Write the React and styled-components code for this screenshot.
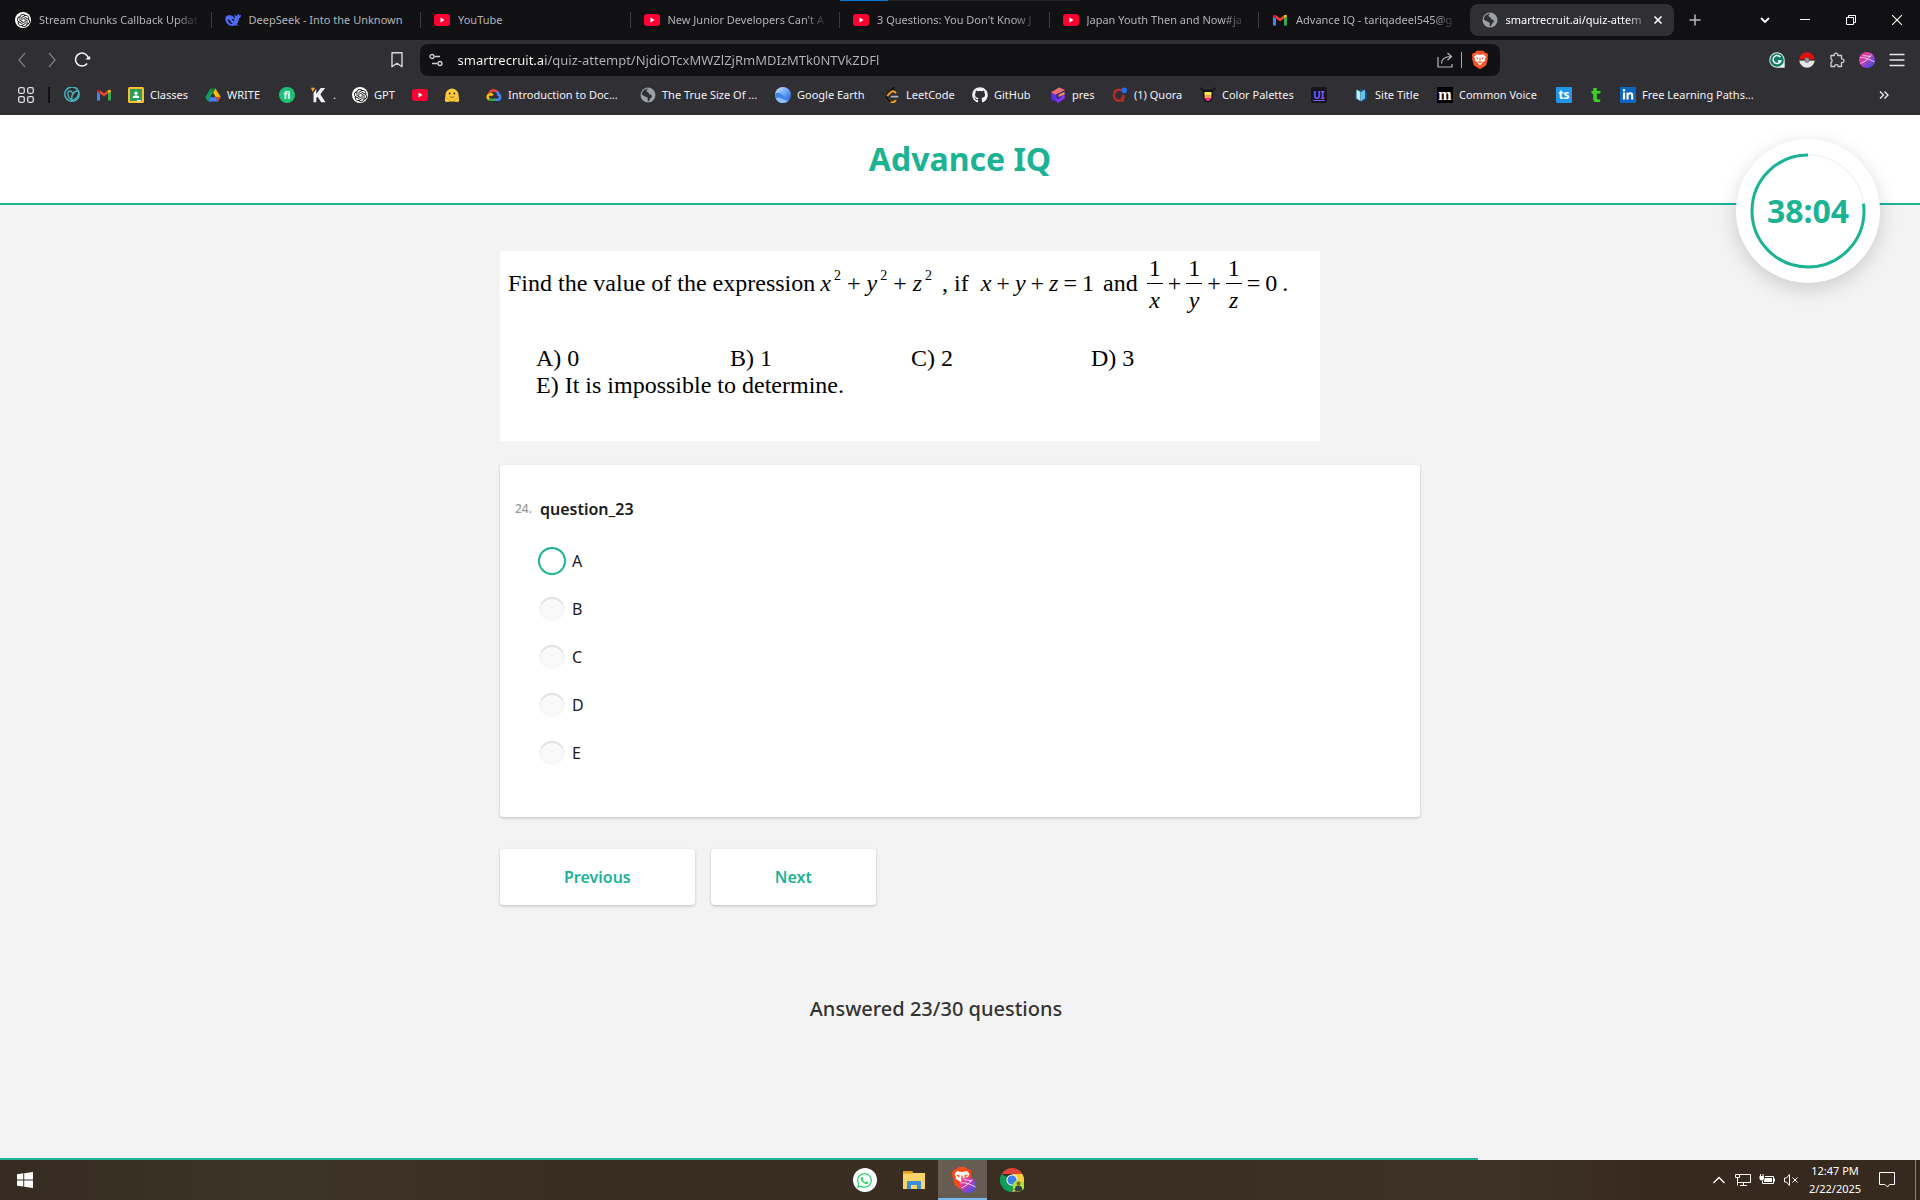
import React from "react";
import styled, { createGlobalStyle, css } from "styled-components";
import { SiOpenai } from "react-icons/si";
import { FaGithub, FaLinkedinIn, FaWhatsapp } from "react-icons/fa";

const GREEN = "#1bb394";
const FONT = `"Noto Sans", "Open Sans", sans-serif`;

const GlobalStyle = createGlobalStyle`
  *, *::before, *::after { box-sizing: border-box; }
  body { margin: 0; background: #f3f3f3; }
  button, input { font: inherit; color: inherit; }
  button { border: 0; background: none; padding: 0; cursor: pointer; }
  svg { display: block; }
`;

const Screen = styled.div`
  min-height: 100vh;
  display: flex;
  flex-direction: column;
  font-family: ${FONT};
`;

/* ---------- browser window ---------- */

const Chrome = styled.div`
  background: #302f34;
  color: #f2f2f4;
  font-size: 11px;
  line-height: 16px;
  height: 115px;
`;

const TabStrip = styled.div`
  position: relative;
  display: flex;
  height: 40px;
  background: #111113;
`;

const ShareMarker = styled.div`
  position: absolute;
  top: 0;
  left: 840px;
  width: 240px;
  height: 1px;
  background: linear-gradient(90deg, #0078d7 48px, #242427 48px);
`;

const TabList = styled.div`
  flex: 0 1 1678px;
  min-width: 0;
  display: grid;
  grid-template-columns: repeat(8, minmax(0, 1fr));
  padding-left: 2px;
`;

const TabItem = styled.div`
  display: flex;
  align-items: center;
  margin: 4px 4px 4px 1px;
  padding: 0 8px 0 12px;
  border-radius: 8px;
  position: relative;
  ${(p) =>
    p.$active
      ? css`
          background: #302f34;
          color: #ffffff;
        `
      : css`
          color: #b4b4b8;
        `}
  ${(p) =>
    p.$divided &&
    css`
      &::after {
        content: "";
        position: absolute;
        right: -4px;
        top: 8px;
        width: 1px;
        height: 16px;
        background: #3b3b3f;
      }
    `}
`;

const TabButton = styled.button`
  flex: 1;
  min-width: 0;
  display: flex;
  align-items: center;
  gap: 8px;
  text-align: left;
  svg { flex: none; }
`;

const TabTitle = styled.span`
  flex: 1;
  min-width: 0;
  overflow: hidden;
  white-space: nowrap;
  ${(p) =>
    p.$fade &&
    css`
      mask-image: linear-gradient(90deg, #000 calc(100% - 24px), transparent);
    `}
`;

const IconButton = styled.button`
  width: ${(p) => p.$w || 30}px;
  align-self: stretch;
  display: flex;
  align-items: center;
  justify-content: center;
  flex: none;
`;

const Spacer = styled.div`
  flex: 1;
`;

const Toolbar = styled.div`
  display: flex;
  align-items: center;
  height: 40px;
  padding: 0 8px 0 7px;
`;

const ToolGroup = styled.div`
  flex: 1;
  display: flex;
  align-self: stretch;
  justify-content: ${(p) => (p.$end ? "flex-end" : "flex-start")};
`;

const AddressBar = styled.div`
  flex: 0 1 1080px;
  height: 32px;
  display: flex;
  align-items: center;
  padding-right: 2px;
  border-radius: 8px;
  background: #111113;
`;

const UrlInput = styled.input`
  flex: 1;
  min-width: 0;
  border: 0;
  outline: 0;
  padding: 0 6px;
  font-size: 13px;
  color: #c4c4c8;
  background: linear-gradient(90deg, #ffffff 94px, #b4b4b8 94px);
  background-clip: text;
  -webkit-background-clip: text;
  -webkit-text-fill-color: transparent;
`;

const ShieldDivider = styled.span`
  width: 1px;
  height: 16px;
  flex: none;
  background: #a8a8ac;
`;

const Bookmarks = styled.nav`
  display: flex;
  align-items: center;
  height: 30px;
  padding: 0 22px 0 18px;
`;

const AppsDivider = styled.span`
  width: 2px;
  height: 16px;
  margin: 0 14px;
  background: #111113;
`;

const BookmarkList = styled.div`
  display: flex;
  gap: 16px;
`;

const Bookmark = styled.a`
  display: flex;
  align-items: center;
  gap: 6px;
  color: inherit;
  text-decoration: none;
  white-space: nowrap;
  svg { flex: none; }
`;

const BookmarkLabel = styled.span`
  width: ${(p) => p.$w}px;
`;

const LetterIcon = styled.span`
  display: flex;
  align-items: center;
  justify-content: center;
  flex: none;
  width: 16px;
  height: 16px;
  border-radius: ${(p) => p.$radius || 0}px;
  background: ${(p) => p.$bg || "transparent"};
  color: ${(p) => p.$fg};
  font-family: ${(p) => p.$font || FONT};
  font-size: ${(p) => p.$size || 12}px;
  line-height: 14px;
  font-weight: 700;
`;

const Badge = styled.span`
  display: flex;
  align-items: center;
  justify-content: center;
  flex: none;
  width: ${(p) => p.$size || 16}px;
  height: ${(p) => p.$size || 16}px;
  border-radius: 50%;
  background: #ffffff;
  color: ${(p) => p.$fg || "#111113"};
`;

/* ---------- quiz page ---------- */

const Header = styled.header`
  position: relative;
  display: flex;
  align-items: center;
  justify-content: center;
  height: 90px;
  background: #ffffff;
  border-bottom: 2px solid ${GREEN};
`;

const Title = styled.h1`
  margin: 0;
  font-size: 32px;
  line-height: 44px;
  font-weight: 700;
  color: ${GREEN};
`;

const Timer = styled.div`
  position: absolute;
  top: 24px;
  right: 40px;
  width: 144px;
  height: 144px;
  display: grid;
  place-items: center;
  border-radius: 50%;
  background: #ffffff;
  box-shadow: 0 6px 20px rgba(0, 0, 0, 0.16);
  color: ${GREEN};
  font-size: 32px;
  line-height: 44px;
  font-weight: 700;
  > * { grid-area: 1 / 1; }
`;

const Main = styled.main`
  flex: 1;
  width: 920px;
  max-width: 100%;
  margin: 0 auto;
  padding-top: 46px;
`;

const Problem = styled.section`
  width: 820px;
  max-width: 100%;
  min-height: 190px;
  padding: 1px 8px 0;
  background: #ffffff;
  color: #000000;
  font-family: "Liberation Serif", "Times New Roman", serif;
  font-size: 24px;
  line-height: 27px;
`;

const Statement = styled.div`
  display: flex;
  align-items: center;
  height: 62px;
  white-space: pre;
`;

const Formula = styled.span`
  display: inline-flex;
  align-items: center;
  gap: ${(p) => p.$gap}px;
  margin: 0 ${(p) => p.$mr || 0}px 0 ${(p) => p.$ml || 0}px;
`;

const Power = styled.span`
  display: inline-flex;
  gap: 3px;
  sup {
    font-size: 14px;
    line-height: 12px;
    vertical-align: baseline;
  }
`;

const Fraction = styled.span`
  display: inline-flex;
  flex-direction: column;
  align-items: center;
  width: 16px;
  line-height: 32px;
  > :first-child {
    height: 31px;
  }
  > :last-child {
    border-top: 1px solid #000000;
    width: 100%;
    text-align: center;
    height: 31px;
  }
`;

const Choices = styled.div`
  display: grid;
  grid-template-columns: 194px 181px 180px auto;
  padding: 31px 0 0 28px;
`;

const WideChoice = styled.span`
  grid-column: 1 / -1;
`;

const Card = styled.form`
  margin-top: 24px;
  min-height: 352px;
  padding: 31px 15px 40px;
  border-radius: 4px;
  background: #ffffff;
  box-shadow: 0 1px 3px rgba(0, 0, 0, 0.22);
`;

const Question = styled.fieldset`
  border: 0;
  margin: 0;
  padding: 0;
`;

const Legend = styled.legend`
  display: flex;
  align-items: center;
  gap: 8px;
  padding: 0;
  font-size: 16px;
  line-height: 26px;
  font-weight: 600;
  color: #1a1a1a;
`;

const Ordinal = styled.span`
  font-size: 12px;
  font-weight: 500;
  color: #999999;
`;

const Options = styled.div`
  display: flex;
  flex-direction: column;
  gap: 24px;
  padding: 27px 0 0 25px;
`;

const Option = styled.label`
  display: flex;
  align-items: center;
  gap: 8px;
  font-size: 16px;
  line-height: 24px;
  color: #1a1a1a;
`;

const Radio = styled.input`
  appearance: none;
  width: 24px;
  height: 24px;
  margin: 0;
  border-radius: 50%;
  background: #f9f9f9;
  box-shadow: inset 0 1px 2px rgba(0, 0, 0, 0.18);
  ${(p) =>
    p.$current &&
    css`
      background: #ffffff;
      box-shadow: 0 0 0 2px ${GREEN};
    `}
`;

const Actions = styled.div`
  display: flex;
  gap: 16px;
  margin-top: 32px;
`;

const ActionButton = styled.button`
  height: 56px;
  padding: 0 64px;
  border-radius: 4px;
  background: #ffffff;
  box-shadow: 0 1px 3px rgba(0, 0, 0, 0.22);
  font-size: 16px;
  line-height: 24px;
  font-weight: 600;
  color: ${GREEN};
`;

const Answered = styled.p`
  margin: 88px 48px 0 0;
  text-align: center;
  font-size: 20px;
  line-height: 32px;
  font-weight: 500;
  color: #333333;
`;

const Progress = styled.div`
  height: 2px;
  background: linear-gradient(${GREEN}, ${GREEN}) no-repeat;
  background-size: 77% 100%;
`;

/* ---------- desktop taskbar ---------- */

const Taskbar = styled.footer`
  display: grid;
  grid-template-columns: 1fr auto 1fr;
  height: 40px;
  background: linear-gradient(90deg, #352b20 0, #3d3428 14%, #392d21 30%, #3a2e22 60%, #3d3226 78%, #38291f 86%, #36291e 100%);
  color: #ffffff;
  font-size: 11px;
  line-height: 18px;
`;

const TaskGroup = styled.div`
  display: flex;
  align-items: center;
  justify-content: ${(p) => (p.$end ? "flex-end" : "flex-start")};
  padding-right: ${(p) => (p.$apps ? 44 : 0)}px;
`;

const TaskButton = styled.button`
  width: 49px;
  height: 40px;
  display: flex;
  align-items: center;
  justify-content: center;
  ${(p) =>
    p.$active &&
    css`
      background: #665c52;
      box-shadow: inset 0 -2px 0 #76b9ed;
    `}
`;

const Clock = styled.div`
  width: 64px;
  text-align: center;
  white-space: nowrap;
`;

const DesktopEdge = styled.span`
  width: 5px;
  height: 40px;
  margin-left: 8px;
  border-left: 1px solid #8a8078;
`;

/* ---------- icons ---------- */

const Svg = ({ size = 16, box = 16, children }) => (
  <svg width={size} height={size} viewBox={`0 0 ${box} ${box}`} fill="none" aria-hidden="true">
    {children}
  </svg>
);

const Openai = () => (
  <Badge>
    <SiOpenai size={13} />
  </Badge>
);

const YouTube = () => (
  <Svg>
    <rect x="0" y="2" width="16" height="12" rx="3" fill="#ff0033" />
    <path d="M6.5 5.5v5l4-2.500z" fill="#fff" />
  </Svg>
);

const DeepSeek = () => (
  <Svg>
    <path
      d="M.3 6.500C.3 3.500 3.500 2.500 6.200 3.600 7.800 4.300 9 5.500 9.900 6.700 10.300 5.500 9.700 4.300 9 3.300c1-.2 2 .2 2.700 1C12 3.200 12.800 2.200 13.700 1.800c.2.500.3 1 .2 1.500.7 0 1.300-.2 1.900-.6.2 2-.7 3.400-2 3.900-.1 2.500-.8 4.300-2 5.500.4.600 1 .9 1.700 1-1 .8-2.300.9-3.300.2C6 15.200.5 12.500.3 6.500z"
      fill="#4d6bfe"
    />
    <path d="M2.600 7.200c1.600.2 2.800 1.400 3.500 2.700.5.900 1.200 1.600 2.100 1.900-2.500.5-5.100-1.100-5.600-4.600z" fill="#111113" />
    <path d="M7 7.300c1 .2 1.600.8 1.900 1.700" stroke="#111113" strokeWidth="1.200" />
  </Svg>
);

const Gmail = () => (
  <Svg>
    <path d="M1 13.500V4.300l3 2.300v6.900z" fill="#4285f4" />
    <path d="M15 13.500V4.300l-3 2.300v6.900z" fill="#34a853" />
    <path d="M4 6.600V3.300L8 6.300l4-3v3.300l-4 3z" fill="#ea4335" />
    <path d="M1 4.300C1 2.500 2.700 2.200 4 3.300v3.300L1 4.400z" fill="#c5221f" />
    <path d="M15 4.300c0-1.800-1.700-2.100-3-1v3.300l3-2.200z" fill="#fbbc04" />
  </Svg>
);

const Globe = () => (
  <Svg>
    <circle cx="8" cy="8" r="7.500" fill="#9aa0a6" />
    <path d="M8.500 1.800c-2 .7-2.800 2.200-1 3.200 1.800.6.800 2 2.500 2.400 2 .4 2.500 2.500.8 3.500-1.300.8-1.200 2.300-1.900 3.300-1.500.1-1.600-1.900-1-3.200C6.500 9.800 4.500 9.500 1.800 7.500c.2-3.200 3-6.100 6.700-5.700z" fill="#302f34" />
  </Svg>
);

const Back = () => (
  <Svg size={18} box={18}>
    <path d="M12 2 6 9l6 7" stroke="#7b7b80" strokeWidth="1.300" />
  </Svg>
);
const Forward = () => (
  <Svg size={18} box={18}>
    <path d="m6 2 6 7-6 7" stroke="#7b7b80" strokeWidth="1.300" />
  </Svg>
);
const Reload = () => (
  <Svg size={18} box={18}>
    <path d="M14.200 12.500A6.500 6.500 0 1 1 15.500 8" stroke="#f2f2f4" strokeWidth="1.600" />
    <path d="M12.200 8.500h5V5z" fill="#f2f2f4" />
  </Svg>
);
const BookmarkIcon = () => (
  <Svg size={18} box={18}>
    <path d="M4 1.800h10v14l-5-3.600-5 3.600z" stroke="#d8d8dc" strokeWidth="1.400" strokeLinejoin="round" />
  </Svg>
);
const SiteSettings = () => (
  <Svg>
    <g stroke="#d0d0d4" strokeWidth="1.300">
      <circle cx="4" cy="4.500" r="2" />
      <path d="M6.500 4.500H12M4 11.500h5.500" />
      <circle cx="12" cy="11.500" r="2" />
    </g>
  </Svg>
);
const Share = () => (
  <Svg>
    <g stroke="#b8b8bc" strokeWidth="1.200" strokeLinejoin="round">
      <path d="M1 5v10h14v-3" />
      <path d="M4.500 11.500C4.500 7 7.500 4.500 14 4.500M10.500 1 14.500 4.500l-4 3.700" />
    </g>
  </Svg>
);
const Brave = () => (
  <svg width="20" height="20" viewBox="0 0 24 24" aria-hidden="true">
    <path d="M12 1h4l2 2.200 2.700.4 1 3.200-.7 1.700.5 2-2.300 8L12 23l-7.200-4.500-2.300-8 .5-2-.7-1.700 1-3.200L6 3.200 8 1z" fill="#fb542b" />
    <path d="m8 5 4 1 4-1 3 3.200-1.300 3.300.3 1.500-3.500 2-.2 1.200L12 18.500l-2.300-2.300-.2-1.200L6 13l.3-1.500L5 8.200z" fill="#fff" />
    <path d="m7 8.500 3.200 1-.7 2zM17 8.500l-3.200 1 .7 2zM12 8l.8 3.500L12 14l-.8-2.500zM9.500 13.200l2.500 1.300 2.500-1.300-.8 2-1.700.6-1.700-.6z" fill="#fb542b" />
  </svg>
);
const Grammarly = () => (
  <Svg>
    <path d="M8 .3A7.700 7.700 0 0 1 15.700 8v7.700H8A7.700 7.700 0 0 1 8 .3z" fill="#e8f3ef" />
    <circle cx="8" cy="8" r="6.800" fill="#0b7b63" />
    <path d="M11.400 5.200A4 4 0 1 0 11.800 9H8.800" stroke="#fff" strokeWidth="1.500" />
  </Svg>
);
const Pokeball = () => (
  <Svg>
    <path d="M.3 8a7.700 7.700 0 0 1 15.400 0z" fill="#e0100c" />
    <path d="M.3 8a7.700 7.700 0 0 0 15.400 0z" fill="#e4e6e8" />
    <path d="M.5 8h15" stroke="#222" strokeWidth="1.200" />
    <circle cx="8" cy="8" r="2.300" fill="#9a9a9e" stroke="#666" />
  </Svg>
);
const Puzzle = () => (
  <Svg>
    <path
      d="M2 3.500h3.300a1.800 1.800 0 1 1 3.400 0h3.800v3.400a1.900 1.900 0 1 1 0 3.600v4H9.200a1.800 1.800 0 0 0-3.600 0H2v-4.200a1.700 1.700 0 0 0 0-3.200z"
      stroke="#d0d0d4"
      strokeWidth="1.300"
      strokeLinejoin="round"
    />
  </Svg>
);
const Profile = () => (
  <Svg>
    <defs>
      <linearGradient id="orb" x1="0" y1="0" x2="1" y2="1">
        <stop offset="0.250" stopColor="#f0389a" />
        <stop offset="0.800" stopColor="#5a4be0" />
      </linearGradient>
    </defs>
    <circle cx="8" cy="8" r="8" fill="url(#orb)" />
    <path d="M.8 5.500C5 5 10 7 15.500 10M1.500 11.500C6 10 10 6 12.500 2.500M4 3.500l8 1" stroke="#fbdcf0" strokeWidth="0.900" />
  </Svg>
);
const Menu = () => (
  <Svg>
    <path d="M.5 2.500h15M.5 8h15M.5 13.500h15" stroke="#e6e6e8" strokeWidth="1.400" />
  </Svg>
);
const AppsGrid = () => (
  <Svg>
    <g stroke="#e0e0e4" strokeWidth="1.300">
      <rect x="0.700" y="0.700" width="5.600" height="5.600" rx="1.500" />
      <rect x="9.700" y="0.700" width="5.600" height="5.600" rx="1.500" />
      <rect x="0.700" y="9.700" width="5.600" height="5.600" rx="1.500" />
      <rect x="9.700" y="9.700" width="5.600" height="5.600" rx="1.500" />
    </g>
  </Svg>
);
const Leaf = () => (
  <Svg>
    <g stroke="#46b5ba" strokeWidth="1.400">
      <path d="M13.800 2.800A7.200 7.200 0 1 0 15.200 8c0-1-.2-2-.5-2.700" />
      <path d="M8 13.500C4 11 2.800 6.500 4.500 4.500c2-1.700 4.500 1 4.500 3.500" />
      <path d="M8 13.500c-1-5 1-9.500 6.500-9.800.8 4.500-1.500 8-6.500 9.800z" />
    </g>
  </Svg>
);
const Classroom = () => (
  <Svg>
    <rect width="16" height="16" rx="1.500" fill="#fbc02d" />
    <rect x="2" y="2" width="12" height="12" fill="#2e9c5a" />
    <circle cx="8" cy="6.300" r="1.700" fill="#fff" />
    <path d="M4.500 11c.3-2 1.800-2.500 3.500-2.500s3.200.5 3.500 2.500z" fill="#fff" />
    <path d="M9 13h4v1.500H9z" fill="#e6e6e6" />
  </Svg>
);
const Drive = () => (
  <Svg>
    <path d="M5.500 1.500h5L8 6z" fill="#188038" />
    <path d="M5.500 1.500 8 6 3 14.500.3 10.200z" fill="#0f9d58" />
    <path d="M10.500 1.500 8 6l2.600 4.300h5.200z" fill="#fbbc04" />
    <path d="M5.500 10.300h5.100L8 6z" fill="#302f34" />
    <path d="M5.500 10.300h5.200L13 14.500H3z" fill="#4285f4" />
    <path d="M10.600 10.300h5.200L13 14.500z" fill="#ea4335" />
  </Svg>
);
const KIcon = () => (
  <Svg>
    <path d="M0 .8h4.200L1.600 5z" fill="#f5a623" />
    <path d="M2.500 6 5.300 2v5l4.500-6h4.400L9.300 7.300l5.200 8h-4.300L6.600 9.800 5.300 11.300v4H2.500z" fill="#f4f4f4" />
  </Svg>
);
const Hug = () => (
  <Svg>
    <path d="M1.500 8A6.500 6.500 0 0 1 14.500 8l.7 5.500c-.8 1.800-3.200 2-4.600 1H5.400C4 15.500 1.600 15.300.8 13.500z" fill="#ffcc3a" />
    <circle cx="5.700" cy="6.500" r="1" fill="#3a3b45" />
    <circle cx="10.300" cy="6.500" r="1" fill="#3a3b45" />
    <path d="M5.500 9c1.500 1.200 3.500 1.200 5 0-.3 2.400-4.700 2.400-5 0z" fill="#6b4a30" />
    <path d="M2 11.500c2-.8 3.500 1 3.500 2.800M14 11.500c-2-.8-3.500 1-3.500 2.800" stroke="#f09a1c" />
  </Svg>
);
const Cloud = () => (
  <Svg>
    <path d="M3.500 7C4 3.500 8 2 11.200 5" stroke="#ea4335" strokeWidth="2.600" />
    <path d="M10.800 4.500c1 .8 1.500 1.800 1.500 3 2.200 0 2.700 4.700-.3 5.300H9" stroke="#4285f4" strokeWidth="2.600" />
    <path d="M9.500 12.800H4.800c-1 0-1.700-.3-2.300-.8" stroke="#34a853" strokeWidth="2.600" />
    <path d="M3 12.300C.8 10.500 1.500 7.500 4.500 7.300c1 0 1.800.4 2.300 1" stroke="#fbbc04" strokeWidth="2.600" />
  </Svg>
);
const Earth = () => (
  <Svg>
    <defs>
      <linearGradient id="sea" x1="0" y1="0" x2="1" y2="1">
        <stop offset="0" stopColor="#d6e8ff" />
        <stop offset="0.500" stopColor="#6aa5f8" />
        <stop offset="1" stopColor="#1c4fc0" />
      </linearGradient>
    </defs>
    <circle cx="8" cy="8" r="8" fill="url(#sea)" />
    <path d="M.1 7C3 4.500 5.500 6 8.500 9c2.500 2.300 4.500 2.500 6.500 2-1.300 3-4 5-7 5-4.500 0-8-3.500-7.900-9z" fill="#3f82ee" />
    <path d="M.8 11.500C4 9 6 12 13 14 9 17.500 2.800 16.200.8 11.500z" fill="#8ebcff" />
  </Svg>
);
const LeetCode = () => (
  <Svg>
    <path d="M9.800.8 3.300 7.500" stroke="#0b0b0c" strokeWidth="1.900" strokeLinecap="round" />
    <path d="M11.500 5.500C9.800 3.800 8 4 6.800 5.200L3.500 8.500c-1 1.200-1 2.200 0 3.300l2.700 2.700c1.500 1.300 3.500 1.200 5.300-.8" stroke="#f89f1b" strokeWidth="1.900" strokeLinecap="round" />
    <path d="M2.700 9.500c-.3 1 0 1.700.8 2.400l2.700 2.700" stroke="#0b0b0c" strokeWidth="1.900" strokeLinecap="round" />
    <path d="M7.500 9.700h6" stroke="#b3b3b3" strokeWidth="1.800" strokeLinecap="round" />
  </Svg>
);
const Pres = () => (
  <Svg>
    <path d="M9 .5 15 3.200 6.500 7.500v3l1.700 1 3-1.700V9L8.500 10V7.500l6-2.800v6.800L8 15.800 1.200 12V5z" fill="#5a2cf0" />
    <path d="M9 .5 15 3 5.200 7.700 1.200 5.200z" fill="#ef6f6a" />
    <path d="m5.500 11.500 2.700 1.600 3.300-2.100V8.500l3-1.500v4.500L8 15.800z" fill="#8d35f5" />
    <path d="m8.500 7.700 6-2.900v2.500L8.500 10z" fill="#f5913a" />
  </Svg>
);
const Quora = () => (
  <Svg>
    <path d="M9.500 3.200C6 1.500 2 3.500 2 8.500c0 5 5 6.500 8 4.500 1.500-1.300 1.700-3.500 1.500-5.500" stroke="#b92b27" strokeWidth="2.300" />
    <path d="M8.500 11c1.200.2 2 3.500 3.800 3.500" stroke="#b92b27" strokeWidth="1.700" />
    <circle cx="12.200" cy="3.200" r="2.800" fill="#1f6ff2" />
  </Svg>
);
const Palette = () => (
  <Svg>
    <path d="M.5.800 3 3M15.500.800 13 3M2.500 3.500h11" stroke="#111" strokeWidth="1.700" />
    <path d="M3 4h10v5.500C13 13 10.500 15.500 8 15.500S3 13 3 9.500z" fill="#151515" />
    <path d="M4.500 5h7v3h-7z" fill="#ffe94a" />
    <path d="M4.500 8h7v3h-7z" fill="#ff9a5a" />
    <path d="M4.700 11h6.600C10.500 13.300 9.300 14 8 14s-2.500-.7-3.300-3z" fill="#f2308a" />
  </Svg>
);
const SiteTitle = () => (
  <Svg>
    <path d="M8 1.500 14 5v7l-6 3.500L2 12V5z" fill="#204a70" />
    <path d="M3.500 2.500 7.500 5v9l-4-2.500z" fill="#b9edff" />
    <path d="m8 5 4-2.500v9L8 14z" fill="#5cc6ee" />
  </Svg>
);
const Folder = () => (
  <Svg size={24} box={24}>
    <path d="M1 3h9l1 2H1z" fill="#d99a1c" />
    <path d="M1 5h22v16H1z" fill="#fbd467" />
    <path d="M1 5.500h10V4l-2-1H1z" fill="#e0a01e" />
    <path d="M5 13h14v8h-4v-4H9v4H5z" fill="#3b8fd6" />
  </Svg>
);
const ChromeBrowser = () => (
  <Svg size={24} box={24}>
    <path d="M1.600 6A12 12 0 0 1 22.400 6H12z" fill="#db4437" />
    <path d="M1.600 6A12 12 0 0 0 12 24l5.200-9L12 12z" fill="#0f9d58" />
    <path d="M22.400 6H12l5.200 9L12 24A12 12 0 0 0 22.400 6z" fill="#ffcd40" />
    <circle cx="12" cy="12" r="5.600" fill="#f1f1f1" />
    <circle cx="12" cy="12" r="4.500" fill="#3b7ff0" />
    <circle cx="18.500" cy="18" r="5.800" fill="#a9e62c" />
    <circle cx="18.500" cy="15.500" r="1.900" fill="#8a5a44" />
    <path d="M14.500 22c.5-3.500 2-4.500 4-4.500s3.500 1 4 4.500c-2 2-6 2-8 0z" fill="#34404e" />
  </Svg>
);
const BraveTask = () => (
  <svg width="26" height="26" viewBox="0 0 26 26" aria-hidden="true">
    <path d="M12 0h3l2.500 2.200 3 .8 1 3-.5 4-1.500 7L12 23l-7-4.500L2.500 10 2 6l1-3 3-.8L9 0z" fill="#fb4a14" />
    <path d="m7 4 5 1 5-1 2.500 3-1.500 3 .2 2-3.500 2-2.700 4-2.700-4L5.800 12 6 10 4.500 7z" fill="#fff" />
    <path d="m6 7.500 4 1-1 2zM18 7.500l-4 1 1 2zM12 7l1 4-1 2.500-1-2.500z" fill="#fb4a14" />
    <circle cx="18" cy="18" r="8" fill="url(#orb)" />
    <path d="M11 16c4-1 9 1 14.500 4M11.500 21c4-1.500 8-5 10.500-8.500M14 12.500l8 1.500" stroke="#fbdcf0" fill="none" />
  </svg>
);
const WindowsLogo = () => (
  <Svg>
    <path d="M0 2.200 6.300 1.300v6.200H0zM7.200 1.200 16 0v7.500H7.200zM0 8.400h6.300v6.200L0 13.700zM7.200 8.400H16V16l-8.800-1.200z" fill="#fff" />
  </Svg>
);
const Monitor = () => (
  <Svg>
    <path d="M5 2.500h10.500v8H3M8.500 10.500v3M5 13.500h7" stroke="#fff" />
    <path d="M.5 2.500h4v3h-4z" stroke="#fff" />
    <path d="M2.500 5.500v8" stroke="#fff" />
  </Svg>
);
const Battery = () => (
  <Svg>
    <path d="M6 4.500h8.500v7H3.500V9M15.500 6.500v3M1.500 2v2M4 2v2" stroke="#fff" />
    <path d="M6 6h7v4H5V8zM.5 4h4.500v3L3.500 8.500H2L.5 7z" fill="#fff" />
  </Svg>
);
const Muted = () => (
  <Svg>
    <path d="M1.500 6v4H3.500L6.500 13.500v-11L3.500 6zM9.500 5.500l5 5M14.500 5.500l-5 5" stroke="#fff" />
  </Svg>
);
const Notice = () => (
  <Svg>
    <path d="M.5.500h15v12h-5L8.500 15 6 12.500H.5z" stroke="#fff" />
  </Svg>
);

/* ---------- data ---------- */

const TABS = [
  { title: "Stream Chunks Callback Updat", icon: <Openai />, fade: true },
  { title: "DeepSeek - Into the Unknown", icon: <DeepSeek /> },
  { title: "YouTube", icon: <YouTube /> },
  { title: "New Junior Developers Can't A", icon: <YouTube />, fade: true },
  { title: "3 Questions: You Don't Know J", icon: <YouTube />, fade: true },
  { title: "Japan Youth Then and Now#ja", icon: <YouTube />, fade: true },
  { title: "Advance IQ - tariqadeel545@g", icon: <Gmail />, fade: true },
  { title: "smartrecruit.ai/quiz-attem", icon: <Globe />, fade: true, active: true },
];

const BOOKMARKS = [
  { name: "Learning", icon: <Leaf /> },
  { name: "Gmail", icon: <Gmail /> },
  { label: "Classes", w: 39, icon: <Classroom /> },
  { label: "WRITE", w: 36, icon: <Drive /> },
  { name: "Fiverr", icon: <LetterIcon $bg="#1dbf73" $fg="#fff" $radius={8} $size={10}>fi</LetterIcon> },
  { label: ".", w: 3, icon: <KIcon /> },
  { label: "GPT", w: 22, icon: <Openai /> },
  { name: "YouTube", icon: <YouTube /> },
  { name: "Hugging Face", label: " ", w: 4, icon: <Hug /> },
  { label: "Introduction to Doc...", w: 116, icon: <Cloud /> },
  { label: "The True Size Of ...", w: 97, icon: <Globe /> },
  { label: "Google Earth", w: 71, icon: <Earth /> },
  { label: "LeetCode", w: 50, icon: <LeetCode /> },
  { label: "GitHub", w: 40, icon: <FaGithub size={16} /> },
  { label: "pres", w: 24, icon: <Pres /> },
  { label: "(1) Quora", w: 50, icon: <Quora /> },
  { label: "Color Palettes", w: 73, icon: <Palette /> },
  { name: "UI", label: " ", w: 4, icon: <LetterIcon $bg="#15151c" $fg="#7a5cff" $radius={2} $size={10}><u>UI</u></LetterIcon> },
  { label: "Site Title", w: 46, icon: <SiteTitle /> },
  { label: "Common Voice", w: 81, icon: <LetterIcon $bg="#000" $fg="#fff" $size={16} $font={`"Liberation Serif", serif`}>m</LetterIcon> },
  { name: "TypeScript", icon: <LetterIcon $bg="#2196e8" $fg="#fff" $radius={1}>ts</LetterIcon> },
  { name: "Typing", icon: <LetterIcon $fg="#3ccf1f" $size={20} $font={`"DejaVu Sans", sans-serif`}>t</LetterIcon> },
  { label: "Free Learning Paths...", w: 112, icon: <LetterIcon $bg="#0a66c2" $fg="#fff"><FaLinkedinIn size={12} /></LetterIcon> },
];

const OPTIONS = ["A", "B", "C", "D", "E"];

const RING = 2 * Math.PI * 56;

/* ---------- sections ---------- */

function BrowserChrome() {
  return (
    <Chrome>
      <TabStrip>
        <TabList>
          {TABS.map((t, i) => (
            <TabItem key={t.title} $active={t.active} $divided={i < 6}>
              <TabButton type="button">
                {t.icon}
                <TabTitle $fade={t.fade}>{t.title}</TabTitle>
              </TabButton>
              {t.active && (
                <IconButton type="button" $w={16} aria-label="Close tab">
                  <Svg size={12} box={12}>
                    <path d="m2.500 2.500 7 7m0-7-7 7" stroke="#fff" strokeWidth="1.600" />
                  </Svg>
                </IconButton>
              )}
            </TabItem>
          ))}
        </TabList>
        <IconButton type="button" $w={34} aria-label="New tab">
          <Svg size={12} box={12}>
            <path d="M6 .5v11M.5 6h11" stroke="#b8b8bc" strokeWidth="1.500" />
          </Svg>
        </IconButton>
        <Spacer />
        <IconButton type="button" $w={34} aria-label="Search tabs">
          <Svg size={12} box={12}>
            <path d="m2 4 4 4 4-4" stroke="#fff" strokeWidth="1.800" />
          </Svg>
        </IconButton>
        <IconButton type="button" $w={46} aria-label="Minimize">
          <Svg size={10} box={10}>
            <path d="M0 4.500h10" stroke="#fff" />
          </Svg>
        </IconButton>
        <IconButton type="button" $w={46} aria-label="Restore">
          <Svg size={10} box={10}>
            <path d="M.5 2.500h7v7h-7zM2.500 2.500v-2h7v7h-2" stroke="#fff" />
          </Svg>
        </IconButton>
        <IconButton type="button" $w={46} aria-label="Close">
          <Svg size={10} box={10}>
            <path d="m0 0 10 10M10 0 0 10" stroke="#fff" strokeWidth="1.100" />
          </Svg>
        </IconButton>
        <ShareMarker />
      </TabStrip>

      <Toolbar>
        <ToolGroup>
          <IconButton type="button" aria-label="Back"><Back /></IconButton>
          <IconButton type="button" aria-label="Forward"><Forward /></IconButton>
          <IconButton type="button" aria-label="Reload"><Reload /></IconButton>
          <Spacer />
          <IconButton type="button" $w={46} aria-label="Bookmark this page"><BookmarkIcon /></IconButton>
        </ToolGroup>
        <AddressBar>
          <IconButton type="button" $w={32} aria-label="Site settings"><SiteSettings /></IconButton>
          <UrlInput aria-label="Address" defaultValue="smartrecruit.ai/quiz-attempt/NjdiOTcxMWZlZjRmMDIzMTk0NTVkZDFl" />
          <IconButton type="button" $w={32} aria-label="Share"><Share /></IconButton>
          <ShieldDivider />
          <IconButton type="button" $w={36} aria-label="Brave Shields"><Brave /></IconButton>
        </AddressBar>
        <ToolGroup $end>
          <IconButton type="button" aria-label="Grammarly"><Grammarly /></IconButton>
          <IconButton type="button" aria-label="Pokeball"><Pokeball /></IconButton>
          <IconButton type="button" aria-label="Extensions"><Puzzle /></IconButton>
          <IconButton type="button" aria-label="Profile"><Profile /></IconButton>
          <IconButton type="button" aria-label="Menu"><Menu /></IconButton>
        </ToolGroup>
      </Toolbar>

      <Bookmarks aria-label="Bookmarks">
        <IconButton type="button" $w={16} aria-label="Apps"><AppsGrid /></IconButton>
        <AppsDivider />
        <BookmarkList>
          {BOOKMARKS.map((b) => (
            <Bookmark key={b.name || b.label} href="#" aria-label={b.name}>
              {b.icon}
              {b.label && <BookmarkLabel $w={b.w}>{b.label}</BookmarkLabel>}
            </Bookmark>
          ))}
        </BookmarkList>
        <Spacer />
        <IconButton type="button" $w={28} aria-label="More bookmarks">
          <Svg size={12} box={12}>
            <path d="m2 2.500 3.500 3.500L2 9.500M6.500 2.500 10 6 6.500 9.500" stroke="#f2f2f4" strokeWidth="1.300" />
          </Svg>
        </IconButton>
      </Bookmarks>
    </Chrome>
  );
}

function Squared({ children }) {
  return (
    <Power>
      <i>{children}</i>
      <sup>2</sup>
    </Power>
  );
}

function OneOver({ children }) {
  return (
    <Fraction>
      <span>1</span>
      <i>{children}</i>
    </Fraction>
  );
}

function ProblemSheet() {
  return (
    <Problem>
      <Statement>
        <span>Find the value of the expression</span>
        <Formula $gap={6} $ml={5} $mr={10}>
          <Squared>x</Squared><span>+</span><Squared>y</Squared><span>+</span><Squared>z</Squared>
        </Formula>
        <span>, if</span>
        <Formula $gap={5} $ml={12} $mr={9}>
          <i>x</i><span>+</span><i>y</i><span>+</span><i>z</i><span>=</span><span>1</span>
        </Formula>
        <span>and</span>
        <Formula $gap={5} $ml={9} $mr={5}>
          <OneOver>x</OneOver><span>+</span><OneOver>y</OneOver><span>+</span><OneOver>z</OneOver><span>=</span><span>0</span>
        </Formula>
        <span>.</span>
      </Statement>
      <Choices>
        <span>A) 0</span>
        <span>B) 1</span>
        <span>C) 2</span>
        <span>D) 3</span>
        <WideChoice>E) It is impossible to determine.</WideChoice>
      </Choices>
    </Problem>
  );
}

function CountdownRing() {
  return (
    <svg width="116" height="116" viewBox="0 0 116 116" fill="none" aria-hidden="true">
      <circle cx="58" cy="58" r="56" stroke="#f3f3f3" strokeWidth="1.500" />
      <circle
        cx="58"
        cy="58"
        r="56"
        stroke={GREEN}
        strokeWidth="3"
        strokeDasharray={`${RING * 0.77} ${RING}`}
        transform="translate(0 116) scale(1 -1) rotate(90 58 58)"
      />
    </svg>
  );
}

export default function App() {
  return (
    <Screen>
      <GlobalStyle />
      <BrowserChrome />
      <Header>
        <Title>Advance IQ</Title>
        <Timer role="timer">
          <CountdownRing />
          <span>38:04</span>
        </Timer>
      </Header>
      <Main>
        <ProblemSheet />
        <Card>
          <Question>
            <Legend>
              <Ordinal>24.</Ordinal>
              <span>question_23</span>
            </Legend>
            <Options>
              {OPTIONS.map((o, i) => (
                <Option key={o}>
                  <Radio type="radio" name="question_23" value={o} $current={i === 0} />
                  {o}
                </Option>
              ))}
            </Options>
          </Question>
        </Card>
        <Actions>
          <ActionButton type="button">Previous</ActionButton>
          <ActionButton type="button">Next</ActionButton>
        </Actions>
        <Answered>Answered 23/30 questions</Answered>
      </Main>
      <Progress role="progressbar" aria-valuenow={23} aria-valuemax={30} />
      <Taskbar>
        <TaskGroup>
          <TaskButton type="button" aria-label="Start"><WindowsLogo /></TaskButton>
        </TaskGroup>
        <TaskGroup $apps>
          <TaskButton type="button" aria-label="WhatsApp">
            <Badge $size={24} $fg="#25d366"><FaWhatsapp size={17} /></Badge>
          </TaskButton>
          <TaskButton type="button" aria-label="Files"><Folder /></TaskButton>
          <TaskButton type="button" $active aria-label="Brave"><BraveTask /></TaskButton>
          <TaskButton type="button" aria-label="Chrome"><ChromeBrowser /></TaskButton>
        </TaskGroup>
        <TaskGroup $end>
          <IconButton type="button" $w={24} aria-label="Hidden icons">
            <Svg size={12} box={12}>
              <path d="m.5 9 5.500-5.500L11.500 9" stroke="#fff" strokeWidth="1.300" />
            </Svg>
          </IconButton>
          <IconButton type="button" $w={24} aria-label="Network"><Monitor /></IconButton>
          <IconButton type="button" $w={24} aria-label="Battery"><Battery /></IconButton>
          <IconButton type="button" $w={24} aria-label="Volume"><Muted /></IconButton>
          <Clock>
            <div>12:47 PM</div>
            <div>2/22/2025</div>
          </Clock>
          <IconButton type="button" $w={40} aria-label="Notifications"><Notice /></IconButton>
          <DesktopEdge />
        </TaskGroup>
      </Taskbar>
    </Screen>
  );
}
